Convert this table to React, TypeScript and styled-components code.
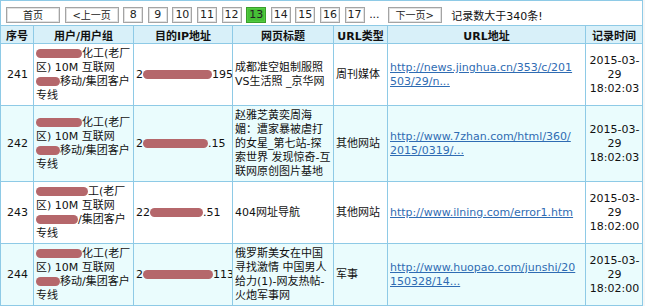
import styled, { createGlobalStyle } from "styled-components";

const GlobalStyle = createGlobalStyle`
    body {
        margin: 0;
        background: #f6f6f6;
        font-family: "DejaVu Sans", Verdana, "Noto Sans CJK SC", sans-serif;
        font-size: 11px;
        color: #111;
    }
`;

type Row = {
    id: number;
    user: { a: number; b: number; aText: string; bText: string };
    ip: { pre: string; w: number; post: string };
    title: string[];
    kind: string;
    url: string[];
    time: string;
};

const rows: Row[] = [
    {
        id: 241,
        user: { a: 46, b: 24, aText: "化工(老厂", bText: "移动/集团客户" },
        ip: { pre: "2", w: 69, post: "195" },
        title: ["成都准空姐制服照", "VS生活照 _京华网"],
        kind: "周刊媒体",
        url: ["http://news.jinghua.cn/353/c/201", "503/29/n..."],
        time: "18:02:03",
    },
    {
        id: 242,
        user: { a: 46, b: 24, aText: "化工(老厂", bText: "移动/集团客户" },
        ip: { pre: "2", w: 65, post: ".15" },
        title: ["赵雅芝黄奕周海", "媚：遭家暴被虐打", "的女星_第七站-探", "索世界 发现惊奇-互", "联网原创图片基地"],
        kind: "其他网站",
        url: ["http://www.7zhan.com/html/360/", "2015/0319/..."],
        time: "18:02:03",
    },
    {
        id: 243,
        user: { a: 52, b: 42, aText: "工(老厂", bText: "/集团客户" },
        ip: { pre: "22", w: 53, post: ".51" },
        title: ["404网址导航"],
        kind: "其他网站",
        url: ["http://www.ilning.com/error1.htm"],
        time: "18:02:00",
    },
    {
        id: 244,
        user: { a: 46, b: 24, aText: "化工(老厂", bText: "移动/集团客户" },
        ip: { pre: "2", w: 70, post: "113" },
        title: ["俄罗斯美女在中国", "寻找激情 中国男人", "给力(1)-网友热帖-", "火炮军事网"],
        kind: "军事",
        url: ["http://www.huopao.com/junshi/20", "150328/14..."],
        time: "18:02:00",
    },
];

const pages = [8, 9, 10, 11, 12, 13, 14, 15, 16, 17];

function App() {
    return (
        <>
            <GlobalStyle />
            <Table>
                <colgroup>
                    <col style={{ width: 33 }} />
                    <col style={{ width: 100 }} />
                    <col style={{ width: 99 }} />
                    <col style={{ width: 101 }} />
                    <col style={{ width: 54 }} />
                    <col style={{ width: 198 }} />
                    <col style={{ width: 57 }} />
                </colgroup>
                <tbody>
                    <tr>
                        <PagerCell colSpan={7}>
                            <Pager>
                                <PageButton $wide>首页</PageButton>
                                <PageButton $wide>&lt;上一页</PageButton>
                                {pages.map((p) => (
                                    <PageButton key={p} $active={p === 13}>{p}</PageButton>
                                ))}
                                <Dots>...</Dots>
                                <PageButton $wide>下一页&gt;</PageButton>
                                <Summary>记录数大于340条!</Summary>
                            </Pager>
                        </PagerCell>
                    </tr>
                    <HeadRow>
                        <HeadCell>序号</HeadCell>
                        <HeadCell>用户/用户组</HeadCell>
                        <HeadCell>目的IP地址</HeadCell>
                        <HeadCell>网页标题</HeadCell>
                        <HeadCell>URL类型</HeadCell>
                        <HeadCell>URL地址</HeadCell>
                        <HeadCell>记录时间</HeadCell>
                    </HeadRow>
                    {rows.map((r, i) => (
                        <DataRow key={r.id} $alt={i % 2 === 1}>
                            <Cell $align="center">{r.id}</Cell>
                            <Cell>
                                <Line><Redact $w={r.user.a} />{r.user.aText}</Line>
                                <Line>区) 10M 互联网</Line>
                                <Line><Redact $w={r.user.b} />{r.user.bText}</Line>
                                <Line>专线</Line>
                            </Cell>
                            <Cell>
                                <Line>
                                    {r.ip.pre}<Redact $w={r.ip.w} />{r.ip.post}
                                </Line>
                            </Cell>
                            <Cell>
                                {r.title.map((t, k) => (
                                    <Line key={k}>{t}</Line>
                                ))}
                            </Cell>
                            <Cell>{r.kind}</Cell>
                            <Cell>
                                <Link href="#">
                                    {r.url.map((u, k) => (
                                        <Line key={k}>{u}</Line>
                                    ))}
                                </Link>
                            </Cell>
                            <Cell $align="center">
                                <Line>2015-03-</Line>
                                <Line>29</Line>
                                <Line>{r.time}</Line>
                            </Cell>
                        </DataRow>
                    ))}
                </tbody>
            </Table>
        </>
    );
}

const Table = styled.table`
    width: 642px;
    table-layout: fixed;
    border-collapse: collapse;
    background: #fff;
    border: 1px solid #a6d3ea;

    td, th {
        border: 1px solid #8ecae6;
    }
`;

const PagerCell = styled.td`
    padding: 5px 0 2px 5px;
    height: 17px;
    background: #fff;
`;

const Pager = styled.div`
    display: flex;
    align-items: center;
    gap: 4.6px;
`;

const PageButton = styled.span<{ $wide?: boolean; $active?: boolean }>`
    display: inline-flex;
    align-items: center;
    justify-content: center;
    box-sizing: border-box;
    height: 16px;
    width: ${({ $wide }) => ($wide ? "54px" : "20px")};
    font-size: ${({ $wide }) => ($wide ? "10px" : "11px")};
    color: #222;
    background: ${({ $active }) => ($active ? "#46bf36" : "#fff")};
    border: 1px solid ${({ $active }) => ($active ? "#3a9c2c" : "#a4a4a4")};
    box-shadow: inset 0 0 0 1px ${({ $active }) => ($active ? "#52cc40" : "#e2e2e2")};
`;

const Dots = styled.span`
    width: 14px;
    font-size: 11px;
`;

const Summary = styled.span`
    margin-left: 5px;
    font-size: 11px;
    color: #111;
`;

const HeadRow = styled.tr`
    background: #d8f0f9;
`;

const HeadCell = styled.th`
    height: 17px;
    padding: 0 2px;
    font-size: 11px;
    font-weight: bold;
    text-align: center;
    color: #111;
`;

const DataRow = styled.tr<{ $alt?: boolean }>`
    background: ${({ $alt }) => ($alt ? "#eafcfd" : "#fff")};
`;

const Cell = styled.td<{ $align?: "left" | "center" }>`
    padding: 3px 1px 2px 2px;
    line-height: 14px;
    vertical-align: middle;
    text-align: ${({ $align }) => $align || "left"};
    font-size: 11px;
    overflow: hidden;
`;

const Line = styled.div`
    white-space: nowrap;
`;

const Redact = styled.span<{ $w: number }>`
    display: inline-block;
    width: ${({ $w }) => $w}px;
    height: 9px;
    vertical-align: -1px;
    background: #b5676b;
    border-radius: 5px;
    filter: blur(0.6px);
`;

const Link = styled.a`
    color: #2f6cb3;
    text-decoration: underline;
`;

export default App;
